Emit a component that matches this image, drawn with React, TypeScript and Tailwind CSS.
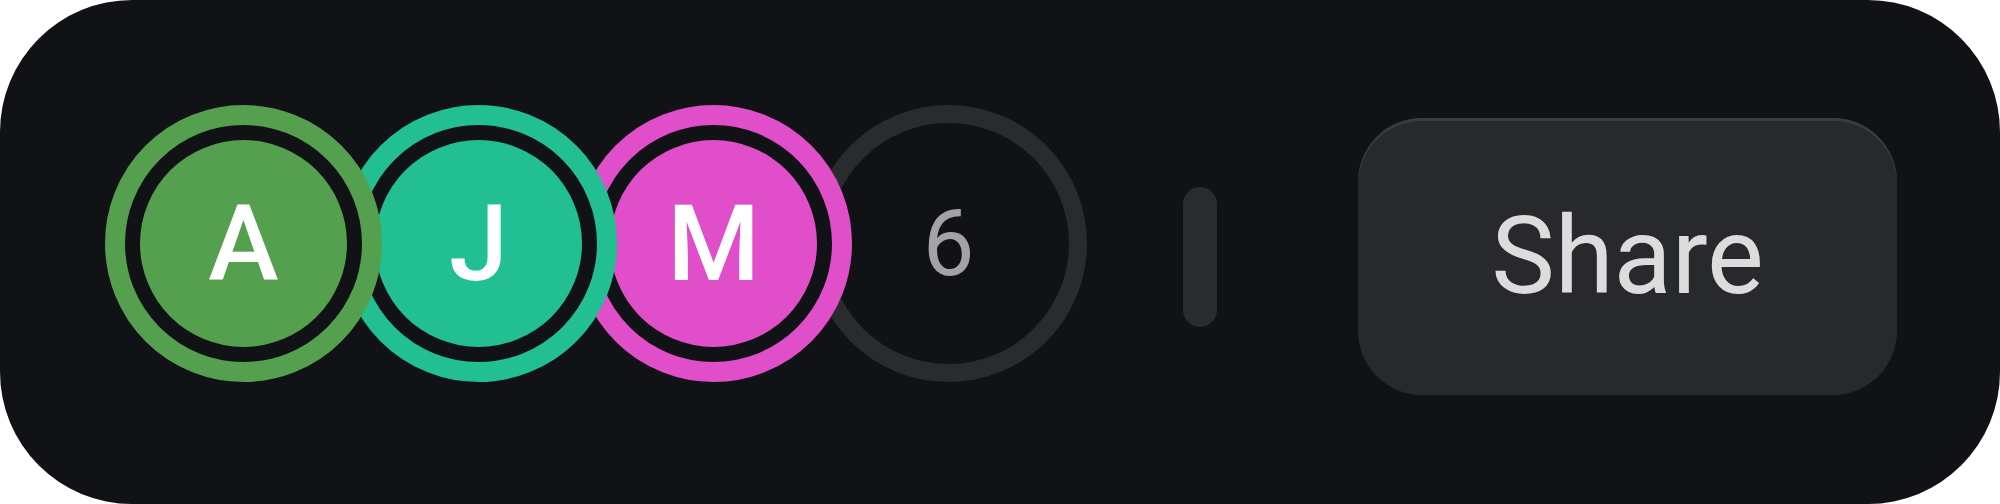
import React from "react";

const people = [
  { letter: "A", ring: "border-[#55a04f]", fill: "bg-[#55a04f]", z: "z-40" },
  { letter: "J", ring: "border-[#22bf93]", fill: "bg-[#22bf93]", z: "z-30" },
  { letter: "M", ring: "border-[#e04fc9]", fill: "bg-[#e04fc9]", z: "z-20" },
];

export default function App() {
  return (
    <div className="flex h-[504px] w-[2000px] items-center rounded-[132px] bg-[#111216] px-[105px] font-['Roboto',sans-serif]">
      <div className="-mt-[17px] flex items-center">
        {people.map((p, i) => (
          <div
            key={p.letter}
            className={`relative ${p.z} ${i > 0 ? "-ml-[42px]" : ""} h-[277px] w-[277px] shrink-0 rounded-full border-[20px] ${p.ring} bg-[#111216] p-[15px]`}
          >
            <div
              className={`flex h-full w-full items-center justify-center rounded-full ${p.fill} text-[106px] font-medium leading-none text-white`}
            >
              {p.letter}
            </div>
          </div>
        ))}
        <div className="relative z-10 -ml-[42px] flex h-[277px] w-[277px] shrink-0 items-center justify-center rounded-full border-[18px] border-[#2a2b2f] bg-[#111216] text-[92px] font-normal leading-none text-[#a3a3a6]">
          6
        </div>
      </div>
      <div className="ml-[96px] mt-[10px] h-[140px] w-[34px] shrink-0 rounded-full bg-[#2a2b2f]" />
      <button className="ml-[141px] mt-[9px] flex h-[277px] w-[539px] shrink-0 items-center justify-center rounded-[64px] bg-[#28292d] text-[107px] font-normal leading-none text-[#dcdcdc] shadow-[inset_0_3px_0_#3a3b40]">
        Share
      </button>
    </div>
  );
}
